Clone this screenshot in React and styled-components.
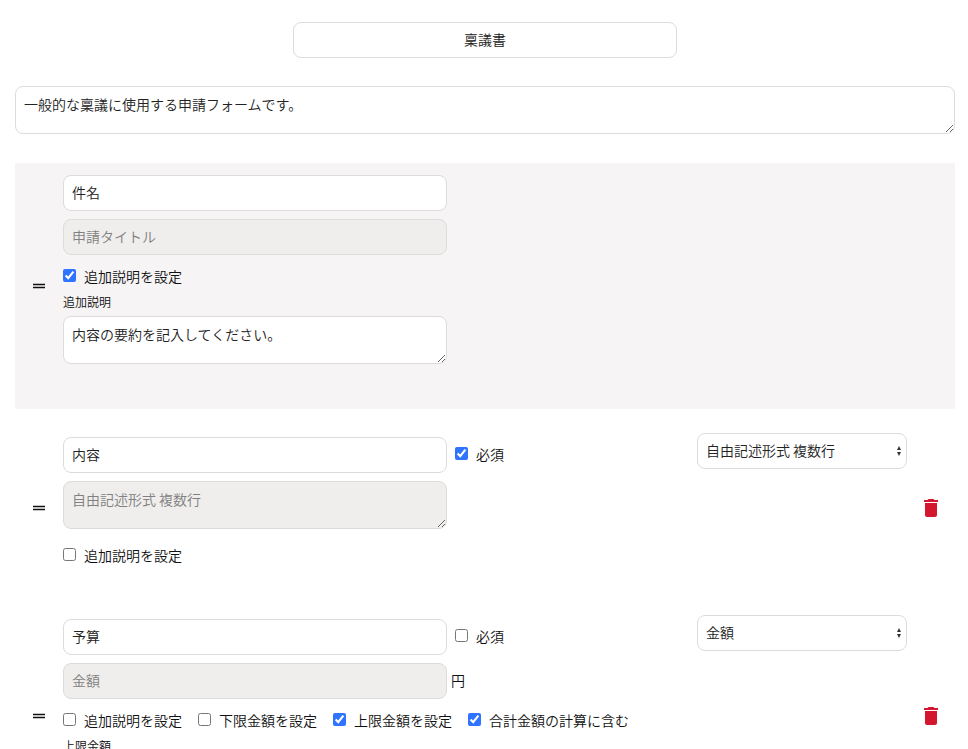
import React, { useId } from "react";
import styled, { createGlobalStyle, css } from "styled-components";
import { MdDelete, MdDragHandle } from "react-icons/md";

const GlobalStyle = createGlobalStyle`
  * {
    box-sizing: border-box;
  }

  body {
    margin: 0;
    background: #fff;
    color: #111;
    font-family: "Noto Sans CJK JP", sans-serif;
    font-size: 14px;
    font-weight: 350;
    line-height: 20px;
  }

  input, textarea, select, button {
    font: inherit;
    color: inherit;
  }
`;

const Page = styled.form`
  display: flex;
  flex-direction: column;
  padding: 22px 13px 22px 15px;
`;

const fieldStyle = css`
  display: block;
  width: 100%;
  padding: 6px 8px 8px;
  border: 1px solid #dcdcdc;
  border-radius: 8px;
  background: #fff;
  color: #222;

  &:disabled {
    background: #efeeec;
  }

  &::placeholder {
    color: #808080;
    opacity: 1;
  }
`;

const TextInput = styled.input`
  ${fieldStyle}
  height: 36px;
`;

const TextArea = styled.textarea`
  ${fieldStyle}
  height: 48px;
  margin-bottom: 5px;
  padding-top: 7px;
  resize: vertical;
  overflow: hidden;
`;

const TitleInput = styled(TextInput)`
  align-self: center;
  max-width: 384px;
  margin-bottom: 28px;
  text-align: center;
`;

const FormDescription = styled(TextArea)`
  margin-bottom: 29px;
`;

const FieldList = styled.div`
  display: flex;
  flex-direction: column;
  gap: 16px;
`;

const FieldRow = styled.section`
  display: grid;
  grid-template-columns: 48px minmax(0, 1fr) 210px 48px;
  background: ${(props) => (props.$fixed ? "#f6f4f5" : "transparent")};
`;

const Handle = styled.div`
  display: flex;
  align-items: center;
  justify-content: center;
  cursor: move;
`;

const FieldBody = styled.div`
  padding: 12px 0 21px;
`;

const Line = styled.div`
  display: grid;
  grid-template-columns: minmax(0, 384px) auto;
  justify-content: start;
  align-items: center;
  column-gap: ${(props) => (props.$tight ? "4px" : "8px")};
  margin-bottom: 8px;
`;

const Unit = styled.span`
  padding-bottom: 2px;
`;

const Options = styled.div`
  display: flex;
  flex-wrap: wrap;
  align-items: center;
  column-gap: 16px;
  min-height: 28px;
`;

const CheckLabel = styled.label`
  display: flex;
  align-items: center;
  gap: 8px;
  padding-bottom: 2px;
  white-space: nowrap;
`;

const CheckBox = styled.input`
  width: 13px;
  height: 13px;
  margin: 0 0 1px;
  accent-color: #2f73ff;
`;

const Extra = styled.div`
  max-width: 384px;
  padding-bottom: ${(props) => (props.$large ? "19px" : "8px")};
`;

const Caption = styled.label`
  display: block;
  padding: 1px 0 4px;
  font-size: 12px;
`;

const SelectBox = styled.div`
  position: relative;
  align-self: start;
  margin-top: 8px;
`;

const Select = styled.select`
  ${fieldStyle}
  height: 36px;
  appearance: none;
`;

const SelectArrows = styled.svg`
  position: absolute;
  top: 13px;
  right: 6px;
  width: 4px;
  height: 10px;
  fill: #333;
  pointer-events: none;
`;

const DeleteButton = styled.button`
  display: flex;
  align-items: center;
  justify-content: center;
  padding: 0;
  border: 0;
  background: none;
  color: #d3172e;
  cursor: pointer;
`;

const Check = ({ label, checked }) => (
  <CheckLabel>
    <CheckBox type="checkbox" defaultChecked={checked} />
    {label}
  </CheckLabel>
);

const TypeSelect = ({ value }) => (
  <SelectBox>
    <Select aria-label="入力形式" defaultValue={value}>
      <option>自由記述形式 複数行</option>
      <option>金額</option>
    </Select>
    <SelectArrows viewBox="0 0 4 10">
      <path d="M2 0L4 4H0zM0 6h4L2 10z" />
    </SelectArrows>
  </SelectBox>
);

const Field = ({ field }) => {
  const extraId = useId();
  const Preview = field.multiline ? TextArea : TextInput;
  const ExtraInput = field.fixed ? TextArea : TextInput;

  return (
    <FieldRow $fixed={field.fixed}>
      <Handle>
        <MdDragHandle size={18} />
      </Handle>
      <FieldBody>
        <Line>
          <TextInput aria-label="項目名" defaultValue={field.name} />
          {!field.fixed && <Check label="必須" checked={field.required} />}
        </Line>
        <Line $tight>
          <Preview aria-label={field.preview} placeholder={field.preview} disabled />
          {field.unit && <Unit>{field.unit}</Unit>}
        </Line>
        <Options>
          {field.options.map((option) => (
            <Check key={option.label} {...option} />
          ))}
        </Options>
        {field.extra && (
          <Extra $large={field.fixed}>
            <Caption htmlFor={extraId}>{field.extra}</Caption>
            <ExtraInput id={extraId} defaultValue={field.extraValue} />
          </Extra>
        )}
      </FieldBody>
      {!field.fixed && (
        <>
          <TypeSelect value={field.type} />
          <DeleteButton type="button" aria-label="削除">
            <MdDelete size={24} />
          </DeleteButton>
        </>
      )}
    </FieldRow>
  );
};

const fields = [
  {
    name: "件名",
    fixed: true,
    preview: "申請タイトル",
    options: [{ label: "追加説明を設定", checked: true }],
    extra: "追加説明",
    extraValue: "内容の要約を記入してください。",
  },
  {
    name: "内容",
    required: true,
    multiline: true,
    preview: "自由記述形式 複数行",
    type: "自由記述形式 複数行",
    options: [{ label: "追加説明を設定" }],
  },
  {
    name: "予算",
    preview: "金額",
    type: "金額",
    unit: "円",
    options: [
      { label: "追加説明を設定" },
      { label: "下限金額を設定" },
      { label: "上限金額を設定", checked: true },
      { label: "合計金額の計算に含む", checked: true },
    ],
    extra: "上限金額",
  },
];

const App = () => (
  <>
    <GlobalStyle />
    <Page>
      <TitleInput aria-label="フォーム名" defaultValue="稟議書" />
      <FormDescription
        aria-label="フォームの説明"
        defaultValue="一般的な稟議に使用する申請フォームです。"
      />
      <FieldList>
        {fields.map((field) => (
          <Field key={field.name} field={field} />
        ))}
      </FieldList>
    </Page>
  </>
);

export default App;
